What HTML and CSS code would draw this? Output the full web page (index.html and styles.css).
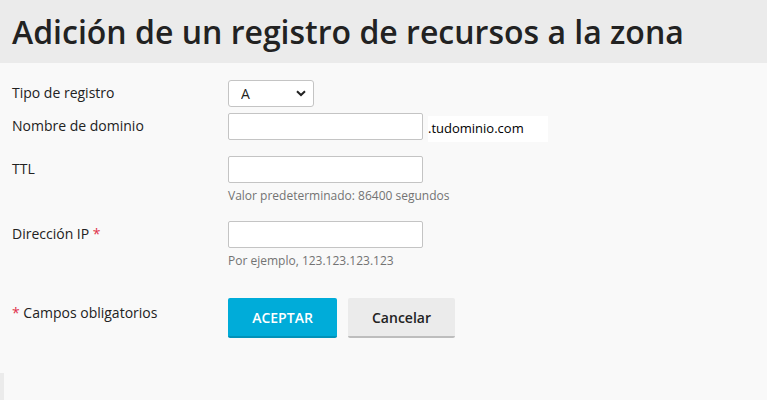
FILE: index.html
```html
<!DOCTYPE html>
<html lang="es">
<head>
    <meta charset="UTF-8">
    <meta name="viewport" content="width=device-width, initial-scale=1.0">
    <title>Adición de un registro de recursos a la zona</title>
    <link rel="stylesheet" href="styles.css">
</head>
<body>

    <!-- Page title -->
    <header class="page-header">
        <h1>Adición de un registro de recursos a la zona</h1>
    </header>

    <!-- Record form -->
    <form class="record-form">
        <div class="form-row">
            <label class="field-label" for="type">Tipo de registro</label>
            <div class="field">
                <div class="select-wrap">
                    <select id="type" class="select">
                        <option>A</option>
                        <option>AAAA</option>
                        <option>CNAME</option>
                        <option>MX</option>
                        <option>TXT</option>
                    </select>
                    <svg class="select-arrow" width="10" height="7" viewBox="0 0 10 7">
                        <path d="M1 1.2 L5 5 L9 1.2" fill="none" stroke="#222" stroke-width="2"/>
                    </svg>
                </div>
            </div>
        </div>

        <div class="form-row row-tight">
            <label class="field-label" for="domain">Nombre de dominio</label>
            <div class="field field-inline">
                <input type="text" id="domain" class="text-input">
                <span class="domain-suffix">.tudominio.com</span>
            </div>
        </div>

        <div class="form-row">
            <label class="field-label" for="ttl">TTL</label>
            <div class="field">
                <input type="text" id="ttl" class="text-input">
                <div class="hint">Valor predeterminado: 86400 segundos</div>
            </div>
        </div>

        <div class="form-row">
            <label class="field-label" for="ip">Dirección IP <span class="required">*</span></label>
            <div class="field">
                <input type="text" id="ip" class="text-input">
                <div class="hint">Por ejemplo, 123.123.123.123</div>
            </div>
        </div>

        <div class="form-row row-buttons">
            <div class="field-label"><span class="required">*</span> Campos obligatorios</div>
            <div class="field buttons">
                <button type="button" class="btn btn-primary">ACEPTAR</button>
                <button type="button" class="btn btn-default">Cancelar</button>
            </div>
        </div>
    </form>

    <div class="side-tab"></div>

</body>
</html>
```

FILE: styles.css
```css
body {
    margin: 0;
    font-family: "Open Sans", Arial, sans-serif;
    background-color: #f9f9f9;
    color: #222;
    height: 400px;
    overflow: hidden;
    position: relative;
}

.page-header {
    background-color: #ebebeb;
    height: 63px;
    padding: 0 12px;
    display: flex;
    align-items: center;
}

.page-header h1 {
    margin: 0;
    font-size: 32px;
    font-weight: 600;
    color: #222;
}

.record-form {
    padding: 17px 12px 0 12px;
}

.form-row {
    display: grid;
    grid-template-columns: 216px 1fr;
    align-items: start;
    margin-bottom: 17px;
}

.row-tight {
    margin-top: -11px;
    margin-bottom: 14px;
}

.row-buttons {
    margin-top: 29px;
}

.field-label {
    font-size: 14px;
    line-height: 20px;
    padding-top: 3px;
    color: #222;
}

.row-buttons .field-label {
    padding-top: 5px;
}

.required {
    color: #e0324b;
}

.field-inline {
    display: flex;
    align-items: flex-start;
}

.select-wrap {
    position: relative;
    width: 86px;
}

.select {
    appearance: none;
    -webkit-appearance: none;
    width: 86px;
    height: 27px;
    padding: 0 0 0 12px;
    font-family: "Open Sans", Arial, sans-serif;
    font-size: 14px;
    color: #222;
    background-color: #fff;
    border: 1px solid #c4c4c4;
    border-radius: 3px;
}

.select-arrow {
    position: absolute;
    right: 8px;
    top: 10px;
}

.text-input {
    box-sizing: border-box;
    width: 195px;
    height: 27px;
    margin: 0;
    background-color: #fff;
    border: 1px solid #c4c4c4;
    border-radius: 2px;
}

.domain-suffix {
    display: block;
    width: 120px;
    height: 26px;
    margin: 3px 0 0 5px;
    background-color: #fff;
    font-size: 13px;
    line-height: 24px;
    color: #000;
}

.hint {
    margin-top: 5px;
    font-size: 12px;
    line-height: 16px;
    color: #737373;
}

.buttons {
    display: flex;
    gap: 11px;
}

.btn {
    height: 40px;
    border: 0;
    border-radius: 2px;
    font-family: "Open Sans", Arial, sans-serif;
    font-size: 14px;
    font-weight: 600;
    cursor: pointer;
}

.btn-primary {
    width: 109px;
    background-color: #00acd9;
    border-bottom: 2px solid #0092b9;
    color: #fff;
}

.btn-default {
    width: 107px;
    background-color: #ebebeb;
    border-bottom: 2px solid #bdbdbd;
    color: #222;
}

.side-tab {
    position: absolute;
    left: 0;
    top: 373px;
    width: 4px;
    height: 30px;
    background-color: #ebebeb;
}
```
